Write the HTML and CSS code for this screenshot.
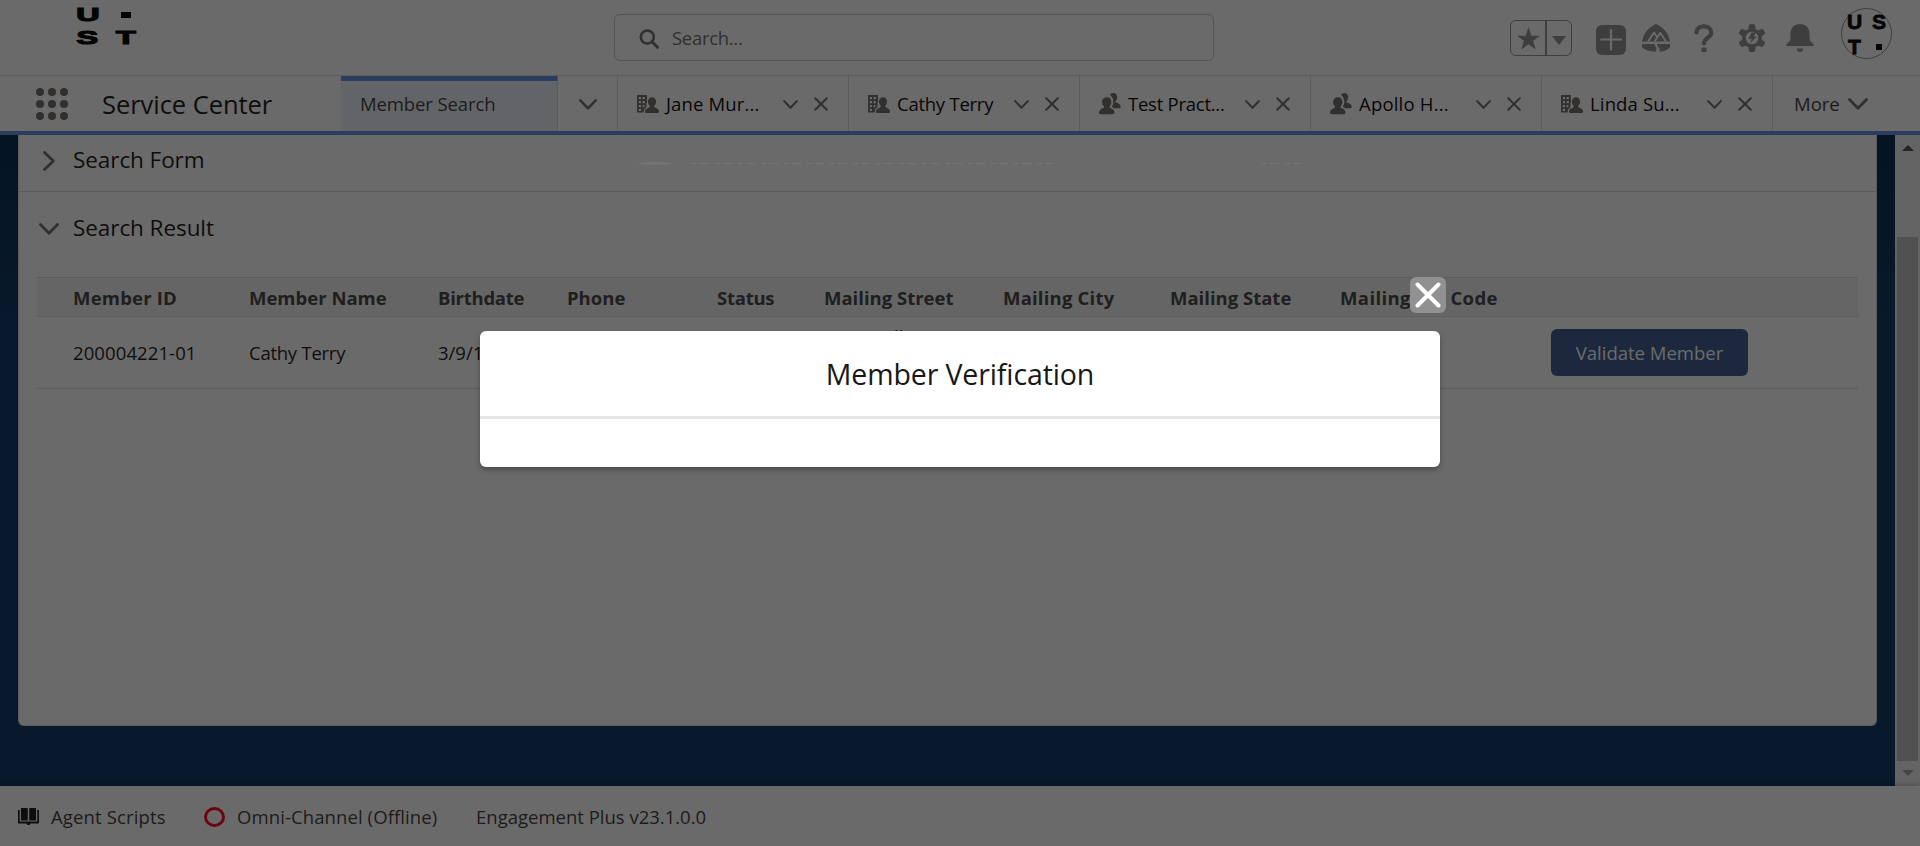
FILE: index.html
```html
<!DOCTYPE html>
<html lang="en">
<head>
<meta charset="utf-8">
<title>Service Center</title>
<link rel="stylesheet" href="styles.css">
</head>
<body>
<svg class="defs" width="0" height="0">
  <symbol id="down" viewBox="0 0 20 12"><path d="M1.5 1.5 10 10.2 18.500 1.500" fill="none" stroke="currentColor" stroke-width="2.800" stroke-linecap="round" stroke-linejoin="round"/></symbol>
  <symbol id="cross" viewBox="0 0 14 14"><path d="M1.200 1.200 12.800 12.800M12.800 1.200 1.200 12.800" fill="none" stroke="currentColor" stroke-width="2" stroke-linecap="round"/></symbol>
  <symbol id="account" viewBox="0 0 22 18"><path fill-rule="evenodd" d="M0 0H10V7C8.500 10 11 11 8 13.500 6.800 14.500 6.800 16 6.800 17.500H0ZM1.800 2V4.200H4V2ZM5.600 2V4.200H7.800V2ZM1.800 6V8.200H4V6ZM5.600 6V8.200H7.800V6ZM1.800 10V12.200H4V10ZM5.600 10V12.200H7.400V10ZM1.800 14V16H4V14Z" fill="currentColor"/><path d="M15 2.200c2.500 0 4.100 1.900 4.100 4.400 0 1.800-.8 3.200-1.700 4.100-.5.700-.2 1.300.6 1.700 2.200.9 4 1.700 4 4.100 0 1-.8 1.500-1.500 1.500h-11C8.700 18 8 17.500 8 16.500c0-2.400 1.800-3.200 4-4.100.8-.4 1.100-1 .6-1.700-.9-.9-1.700-2.300-1.700-4.100 0-2.500 1.600-4.400 4.100-4.400Z" fill="currentColor"/></symbol>
  <symbol id="contact" viewBox="0 0 22 22"><path d="M8 4.200c2.700 0 4.400 2 4.400 4.700 0 1.900-.8 3.400-1.700 4.400-.6.800-.3 1.400.6 1.800 2.400 1 4.200 2 4.200 4.500 0 1-.8 1.700-1.700 1.700H1.700C.8 21.300 0 20.600 0 19.600c0-2.500 1.800-3.500 4.200-4.500.9-.4 1.200-1 .6-1.800-.9-1-1.700-2.500-1.700-4.400C3.100 6.200 5.300 4.200 8 4.200Z" fill="currentColor"/><path d="M11 2c.6-1.200 1.800-2 3.300-2 2.400 0 3.900 1.800 3.900 4.100 0 1.700-.7 3-1.600 3.900-.5.700-.2 1.300.6 1.600 2.700 1.100 4.500 2 4.500 4.100 0 1-.6 1.500-1.500 1.500h-5.400c-.7-.7-1.600-1.100-2.100-1.400.8-1.200 1.700-2.800 1.700-5C14.400 6 13 3.500 11 2Z" fill="currentColor"/></symbol>
</svg>

<header class="header">
  <div class="brand"><span>U</span><i></i><span>S</span><span>T</span></div>
  <div class="search">
    <svg width="21" height="20" viewBox="0 0 21 20"><circle cx="8.300" cy="8" r="6.500" fill="none" stroke="currentColor" stroke-width="2.600"/><path d="M13 12.800 18.500 18.300" stroke="currentColor" stroke-width="3" stroke-linecap="round"/></svg>
    <span>Search...</span>
  </div>
  <div class="tools">
    <div class="fav">
      <div class="star"><svg width="23" height="23" viewBox="0 0 24 24"><path d="M12 0 15 9H24L16.800 14.400 19.500 23.500 12 18 4.500 23.500 7.200 14.400 0 9H9Z" fill="currentColor"/></svg></div>
      <div class="caret"><svg width="14" height="9" viewBox="0 0 14 9"><path d="M0 0H14L7 9Z" fill="currentColor"/></svg></div>
    </div>
    <svg class="add" width="30" height="30" viewBox="0 0 30 30"><rect width="30" height="30" rx="6" fill="currentColor"/><path d="M15 5V24.500M5.200 14.500H25" stroke="#fff" stroke-width="2.200" stroke-linecap="round"/></svg>
    <svg class="trail" width="28" height="28" viewBox="0 0 28 28"><path fill-rule="evenodd" d="M14 0C21 3 26.500 9 28 17.500H0C1.500 9 7 3 14 0Z" fill="currentColor"/><path d="M6 17.500 12 8.500 15.500 13.500 18.200 8.800 24 17.500M12.500 17.500 15.500 13.500" fill="none" stroke="#fff" stroke-width="1.800" stroke-linejoin="round"/><path d="M0 20H12.500C12 22.500 16.500 23 13.500 27.800 7.500 27.500 1.500 25.500 0 23ZM15 20H28V23C26.500 25.500 22 27.500 17.500 27.800 19 24 14.500 22.500 15 20Z" fill="currentColor"/></svg>
    <svg class="help" width="20" height="28" viewBox="0 0 20 28"><path d="M2.500 8.500C2.500 4.500 5.500 2.400 9.800 2.400S17.300 5 17.300 8.800C17.300 14 10 13.500 10 19.500" fill="none" stroke="currentColor" stroke-width="4.200" stroke-linecap="round"/><rect x="7.500" y="23.500" width="5" height="4.500" rx="1" fill="currentColor"/></svg>
    <svg class="gear" width="28" height="28" viewBox="0 0 28 28"><g fill="currentColor"><circle cx="14" cy="14" r="9.800"/><rect x="10.700" width="6.600" height="28" rx="2.600"/><rect x="10.700" width="6.600" height="28" rx="2.600" transform="rotate(60 14 14)"/><rect x="10.700" width="6.600" height="28" rx="2.600" transform="rotate(120 14 14)"/></g><circle cx="14" cy="14" r="6.300" fill="#fff"/><path d="M13.700 8.500H18L15.500 12.500H18.500L12.300 19.500 13.800 14.800H10.500Z" fill="currentColor"/></svg>
    <svg class="bell" width="28" height="28" viewBox="0 0 28 28"><path d="M14 0C20 0 23.500 4 23.500 10V14C23.500 17 25 18 27 19.500 28.300 20.500 28 22 26.500 22H1.500C0 22-.3 20.500 1 19.500 3 18 4.500 17 4.500 14V10C4.500 4 8 0 14 0ZM10.500 24.500H17.500C17 26.800 15.800 28 14 28S11 26.800 10.500 24.500Z" fill="currentColor"/></svg>
    <div class="avatar"><span>U</span><span>S</span><span>T</span><i></i></div>
  </div>
</header>

<nav class="nav">
  <div class="waffle"><i></i><i></i><i></i><i></i><i></i><i></i><i></i><i></i><i></i></div>
  <div class="app">Service Center</div>
  <div class="current">Member Search</div>
  <div class="current-menu"><svg width="18" height="11"><use href="#down"/></svg></div>
  <div class="tab"><svg class="ico" width="22" height="18"><use href="#account"/></svg><span class="label">Jane Mur...</span><svg width="15" height="9"><use href="#down"/></svg><svg class="x" width="14" height="14"><use href="#cross"/></svg></div>
  <div class="tab"><svg class="ico" width="22" height="18"><use href="#account"/></svg><span class="label tight">Cathy Terry</span><svg width="15" height="9"><use href="#down"/></svg><svg class="x" width="14" height="14"><use href="#cross"/></svg></div>
  <div class="tab"><svg class="ico" width="22" height="22"><use href="#contact"/></svg><span class="label tight">Test Pract...</span><svg width="15" height="9"><use href="#down"/></svg><svg class="x" width="14" height="14"><use href="#cross"/></svg></div>
  <div class="tab"><svg class="ico" width="22" height="22"><use href="#contact"/></svg><span class="label wide">Apollo H...</span><svg width="15" height="9"><use href="#down"/></svg><svg class="x" width="14" height="14"><use href="#cross"/></svg></div>
  <div class="tab"><svg class="ico" width="22" height="18"><use href="#account"/></svg><span class="label">Linda Su...</span><svg width="15" height="9"><use href="#down"/></svg><svg class="x" width="14" height="14"><use href="#cross"/></svg></div>
  <div class="more"><span>More</span><svg width="20" height="12"><use href="#down"/></svg></div>
</nav>

<main class="main">
  <section class="card">
    <div class="section form"><svg width="12" height="20" viewBox="0 0 12 20"><path d="M1.500 1.500 10.300 10 1.500 18.500" fill="none" stroke="currentColor" stroke-width="2.800" stroke-linecap="round" stroke-linejoin="round"/></svg><span>Search Form</span></div>
    <div class="section result"><svg width="20" height="12"><use href="#down"/></svg><span>Search Result</span></div>
    <div class="table">
      <div class="row head">
        <span class="airy">Member ID</span><span>Member Name</span><span class="tight">Birthdate</span><span>Phone</span><span class="tight">Status</span><span>Mailing Street</span><span class="airy">Mailing City</span><span>Mailing State</span><span class="zip">Mailing Zip Code</span><span></span>
      </div>
      <div class="row body">
        <span class="id">200004221-01</span><span class="tight">Cathy Terry</span><span>3/9/1</span><span></span><span></span><span class="street">ll</span><span></span><span></span><span></span><span><button class="validate">Validate Member</button></span>
      </div>
    </div>
  </section>
  <div class="scroll"><i class="up"></i><div class="thumb"></div><i class="dn"></i></div>
</main>

<footer class="footer">
  <svg width="21" height="17" viewBox="0 0 21 17"><path d="M3 0H8.500C9.500 0 9.800.5 9.800 1V12.500H3ZM11.200 12.500V1C11.200.5 11.500 0 12.500 0H18V12.500ZM0 2H1.700V13.600H19.300V2H21V14.500C21 15.200 20.500 15.500 20 15.500H12.500C12 16.600 11.500 17 10.500 17S9 16.600 8.500 15.500H1C.5 15.500 0 15.200 0 14.500Z" fill="currentColor"/></svg>
  <span class="scripts">Agent Scripts</span>
  <i class="offline"></i>
  <span class="omni">Omni-Channel (Offline)</span>
  <span class="plus">Engagement Plus v23.1.0.0</span>
</footer>

<div class="backdrop"></div>
<div class="toast"><i class="blob"></i><i class="dash"></i><i class="dash short"></i></div>
<div class="modal">
  <button class="close"><svg width="26" height="26" viewBox="0 0 26 26"><path d="M2.500 2.500 23.500 23.500M23.500 2.500 2.500 23.500" stroke="#fff" stroke-width="4" stroke-linecap="round"/></svg></button>
  <h2><span>Member Verification</span></h2>
</div>
</body>
</html>
```
FILE: styles.css
```css
* { box-sizing: border-box; }
body { margin: 0; width: 1920px; height: 846px; overflow: hidden; display: flex; flex-direction: column; background: #fff; color: #181818; font: 18.5px/28px "Open Sans", "Noto Sans", sans-serif; }
svg { display: block; flex: none; }
.defs { position: absolute; }
span { white-space: nowrap; }

.header { height: 76px; border-bottom: 1px solid #dddbda; display: flex; align-items: flex-start; }
.brand { margin: 6px 0 0 75px; width: 64px; display: grid; grid-template-columns: 25px 23px; column-gap: 14px; grid-auto-rows: 23px; justify-items: center; font: 700 19px/18px "Liberation Sans", sans-serif; color: #000; }
.brand span { transform: scaleX(1.7); -webkit-text-stroke: 1.2px #000; }
.brand i { width: 10px; height: 6px; margin-top: 6px; background: #000; }
.search { margin: 14px 0 0 475px; width: 600px; height: 47px; border: 1px solid #c9c7c5; border-radius: 6px; display: flex; align-items: center; padding: 3px 0 0 24px; color: #706e6b; }
.search span { margin: -3px 0 0 12px; letter-spacing: -.3px; }
.tools { margin-left: 296px; display: flex; align-items: flex-start; color: #919191; }
.fav { margin-top: 20px; width: 62px; height: 36px; border: 1px solid #919191; border-radius: 6px; display: flex; }
.star { width: 36px; border-right: 2px solid #919191; padding: 6px; }
.caret { padding: 15px 0 0 5px; }
.add { margin: 25px 0 0 24px; }
.trail { margin: 24px 0 0 16px; }
.help { margin: 24px 0 0 24px; }
.gear { margin: 24px 0 0 24px; }
.bell { margin: 24px 0 0 20px; }
.avatar { margin: 8px 0 0 27px; width: 51px; height: 51px; border: 1px solid #919191; border-radius: 50%; padding-top: 3px; display: grid; grid-template-columns: 25px 24px; grid-auto-rows: 25px; justify-items: center; font: 700 21px/20px "Liberation Sans", sans-serif; color: #000; }
.avatar span { -webkit-text-stroke: .8px #000; }
.avatar i { width: 6px; height: 6px; margin-top: 7px; background: #000; }

.nav { height: 59px; border-bottom: 4px solid #6090e0; display: flex; }
.waffle { margin: 12px 0 0 36px; width: 32px; height: 32px; display: grid; grid-template-columns: repeat(3, 8px); grid-auto-rows: 8px; gap: 4px; }
.waffle i { border-radius: 50%; background: #706e6b; }
.app { margin-left: 34px; width: 239px; font-size: 25.5px; line-height: 57px; letter-spacing: -.05px; }
.current { width: 217px; height: 55px; border-top: 5px solid #6090e0; border-right: 1px solid #dddbda; background: #ecf0fa; padding-left: 19px; line-height: 46px; color: #3e3e3c; letter-spacing: -.1px; }
.current-menu { width: 59px; padding: 23px 0 0 21px; color: #706e6b; }
.tab { width: 231px; height: 55px; border-left: 1px solid #dddbda; padding: 1px 0 0 19px; display: flex; align-items: center; color: #706e6b; }
.tab .ico { margin-right: 7px; margin-top: -1px; }
.tab .label { width: 117px; color: #080707; margin-top: -1px; letter-spacing: .15px; }
.tab .tight, .tight { letter-spacing: -.25px; }
.tab .wide { letter-spacing: .2px; }
.tab .x { margin-left: 16px; }
.more { flex: 1; border-left: 1px solid #dddbda; padding-left: 21px; display: flex; align-items: center; color: #706e6b; }
.more span { width: 54px; color: #3e3e3c; }

.main { height: 651px; background: linear-gradient(#00284f, #083662 200px); display: flex; }
.card { margin-left: 18px; width: 1859px; height: 591px; background: #fff; border: 1px solid #dddbda; border-top: 0; border-radius: 0 0 6px 6px; }
.section { display: flex; align-items: center; color: #706e6b; font-size: 22.500px; }
.section span { color: #181818; letter-spacing: -.07px; }
.form { height: 57px; padding: 0 0 5px 24px; border-bottom: 1px solid #dddbda; }
.form span { margin: -1px 0 0 18px; }
.result { height: 74px; padding: 0 0 0 20px; }
.result span { margin: -2px 0 0 14px; }
.table { margin: 11px 0 0 18px; width: 1821px; }
.row { display: grid; grid-template-columns: 176px 189px 129px 150px 107px 179px 167px 170px 211px 1fr; padding-left: 36px; border-bottom: 1px solid #dddbda; }
.head { height: 40px; border-top: 1px solid #dddbda; background: #f3f2f2; font-weight: 700; line-height: 40px; color: #444; letter-spacing: 0; }
.airy { letter-spacing: .2px; }
.zip { letter-spacing: .38px; }
.body { height: 72px; line-height: 71px; }
.id { letter-spacing: .1px; }
.street { line-height: 40px; padding-left: 70px; }
.validate { display: block; margin-top: 12px; width: 197px; height: 47px; border: 0; border-radius: 6px; background: #375a91; color: #fff; font: inherit; line-height: 46px; padding: 0; }
.scroll { margin-left: 18px; width: 25px; background: #f1f1f1; display: flex; flex-direction: column; align-items: center; }
.thumb { width: 21px; height: 524px; margin-top: 86px; background: #c1c1c1; }
.up, .dn { border: 6px solid transparent; width: 0; height: 0; }
.up { border-top: 0; border-bottom-color: #505050; margin-top: 10px; }
.dn { border-bottom: 0; border-top-color: #a3a3a3; margin-top: 9px; }

.footer { height: 60px; background: #fff; display: flex; align-items: center; padding: 1px 0 0 18px; box-shadow: 0 -2px 4px rgba(0,0,0,.2); z-index: 1; color: #3e3e3c; }
.footer svg { color: #181818; }
.scripts { margin-left: 12px; width: 153px; letter-spacing: .15px; }
.offline { width: 21px; height: 20px; border: 3px solid #ff0022; border-radius: 50%; }
.omni { margin-left: 12px; width: 239px; letter-spacing: .1px; }

.backdrop { position: absolute; inset: 0; background: rgba(8,7,7,.6); z-index: 2; }
.toast { position: absolute; z-index: 3; left: 638px; top: 162px; display: flex; opacity: .07; }
.blob { width: 32px; height: 3px; border-radius: 50%; background: #fff; }
.dash { width: 366px; height: 1px; margin: 1px 0 0 22px; background: repeating-linear-gradient(90deg, #fff 0 5px, transparent 5px 8px, #fff 8px 17px, transparent 17px 23px); }
.short { width: 40px; margin-left: 204px; }
.modal { position: absolute; z-index: 4; left: 480px; top: 331px; width: 960px; height: 136px; background: #fff; border-radius: 6px; box-shadow: 0 3px 5px rgba(0,0,0,.3); }
.modal h2 { margin: 0; height: 88px; border-bottom: 3px solid #e5e5e5; font-weight: 400; font-size: 28.500px; line-height: 85px; padding-top: 1px; text-align: center; letter-spacing: -.12px; }
.close { position: absolute; left: 930px; top: -54px; width: 36px; height: 36px; border: 0; border-radius: 6px; background: #919191; padding: 5px; }
```
